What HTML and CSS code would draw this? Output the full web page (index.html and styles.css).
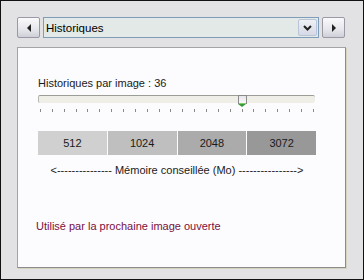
FILE: index.html
```html
<!DOCTYPE html>
<html lang="fr">
<head>
    <meta charset="UTF-8">
    <title>Historiques</title>
    <link rel="stylesheet" href="styles.css">
</head>
<body>
    <div class="frame">
        <div class="toolbar">
            <button class="nav-btn"><span class="tri left"></span></button>
            <div class="combo">
                <span class="combo-text">Historiques</span>
                <span class="combo-btn">
                    <svg width="9" height="6" viewBox="0 0 9 6"><path d="M1 1 L4.5 4.5 L8 1" fill="none" stroke="#222" stroke-width="2"/></svg>
                </span>
            </div>
            <button class="nav-btn"><span class="tri right"></span></button>
        </div>
        <div class="panel">
            <div class="label">Historiques par image : 36</div>
            <div class="slider">
                <div class="track"></div>
                <div class="thumb"></div>
            </div>
            <div class="ticks">
                <i></i><i></i><i></i><i></i><i></i><i></i><i></i><i></i>
                <i></i><i></i><i></i><i></i><i></i><i></i><i></i><i></i>
                <i></i><i></i><i></i><i></i><i></i><i></i><i></i><i></i>
            </div>
            <div class="memory">
                <div class="seg s1">512</div>
                <div class="seg s2">1024</div>
                <div class="seg s3">2048</div>
                <div class="seg s4">3072</div>
            </div>
            <div class="legend">&lt;--------------- Mémoire conseillée (Mo) ----------------&gt;</div>
            <div class="note">Utilisé par la prochaine image ouverte</div>
        </div>
    </div>
</body>
</html>
```

FILE: styles.css
```css
body {
    margin: 0;
    font-family: 'Liberation Sans', 'DejaVu Sans', sans-serif;
    font-size: 11px;
    color: #1a1a1a;
}
.frame {
    width: 364px;
    height: 280px;
    box-sizing: border-box;
    border: 1px solid #111;
    background-color: #e2e2e5;
    padding: 16px 0 0 16px;
}
.toolbar {
    display: flex;
    align-items: center;
    height: 21px;
}
.nav-btn {
    width: 23px;
    height: 21px;
    padding: 0;
    margin: 0;
    border: 1px solid #9a9aa6;
    border-radius: 2px;
    background: linear-gradient(#fafafc, #e6e6ec 60%, #cfcfd8);
    display: flex;
    align-items: center;
    justify-content: center;
}
.tri {
    width: 0;
    height: 0;
    border-top: 4px solid transparent;
    border-bottom: 4px solid transparent;
}
.tri.left {
    border-right: 4px solid #222;
}
.tri.right {
    border-left: 4px solid #222;
}
.combo {
    width: 276px;
    height: 21px;
    box-sizing: border-box;
    margin: 0 3px 0 3px;
    border: 1px solid #7f9db9;
    background-color: #e3e9e7;
    display: flex;
    align-items: center;
    justify-content: space-between;
}
.combo-text {
    font-size: 11.5px;
    color: #000;
    padding-left: 2px;
}
.combo-btn {
    width: 19px;
    height: 17px;
    margin-right: 1px;
    box-sizing: border-box;
    border: 1px solid #b8c4d8;
    border-radius: 2px;
    background: linear-gradient(#eef0f6, #d6d9e6);
    display: flex;
    align-items: center;
    justify-content: center;
}
.panel {
    width: 329px;
    height: 221px;
    box-sizing: border-box;
    margin-top: 9px;
    border: 1px solid #8c8c8c;
    border-left-color: #a4a4a4;
    border-top-color: #a4a4a4;
    box-shadow: 1px 1px 0 #d6d2c2;
    background-color: #fcfcfe;
    padding: 28px 0 0 20px;
}
.label {
    height: 14px;
    line-height: 14px;
}
.slider {
    position: relative;
    margin-top: 5px;
    width: 277px;
    height: 11px;
}
.track {
    height: 8px;
    box-sizing: border-box;
    border-top: 1px solid #9d9d97;
    border-left: 1px solid #b5b5af;
    border-radius: 2px;
    background-color: #f0efe7;
    margin-top: 1px;
}
.thumb {
    position: absolute;
    left: 200px;
    top: 0;
    width: 7px;
    height: 8px;
    border: 1px solid #8a8a8a;
    border-bottom: none;
    border-radius: 1px 1px 0 0;
    background: linear-gradient(#e6e6ea, #fafafa);
    box-shadow: 0 -1px 0 #7bd06b inset;
}
.thumb::after {
    content: '';
    position: absolute;
    left: -1px;
    top: 8px;
    border-left: 4px solid transparent;
    border-right: 4px solid transparent;
    border-top: 3px solid #3a9a3a;
}
.ticks {
    display: flex;
    justify-content: space-between;
    width: 274px;
    margin: 3px 0 0 2px;
    height: 3px;
}
.ticks i {
    width: 1px;
    background-color: #8a8a8a;
}
.memory {
    display: flex;
    width: 278px;
    height: 24px;
    margin-top: 19px;
    gap: 1px;
}
.seg {
    flex: 1;
    display: flex;
    align-items: center;
    justify-content: center;
}
.s1 { background-color: #d0d0d0; }
.s2 { background-color: #bfbfbf; }
.s3 { background-color: #ababab; }
.s4 { background-color: #989898; }
.legend {
    width: 278px;
    text-align: center;
    margin-top: 8px;
    line-height: 14px;
}
.note {
    margin-top: 42px;
    margin-left: -2px;
    line-height: 14px;
    color: #7a0f3f;
}
```
